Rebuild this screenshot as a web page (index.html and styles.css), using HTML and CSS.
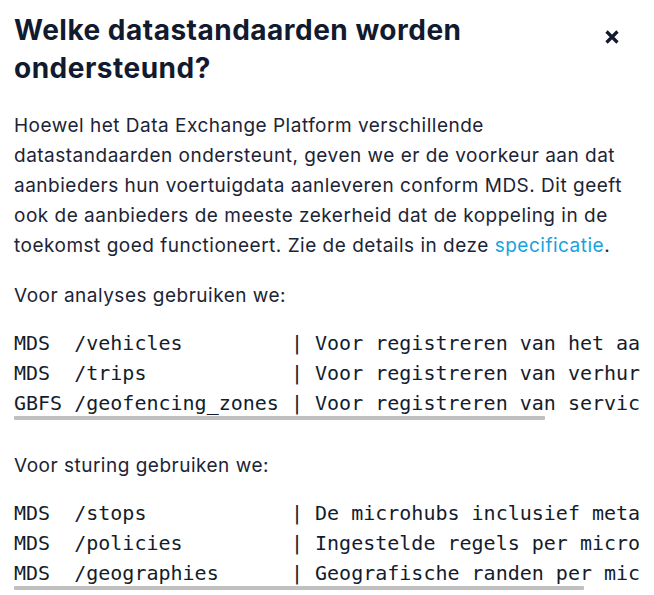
FILE: index.html
```html
<!DOCTYPE html>
<html lang="nl">
<head>
<meta charset="utf-8">
<title>Datastandaarden</title>
<link rel="stylesheet" href="styles.css">
</head>
<body>
<div class="modal">
  <header class="modal-header">
    <h1 class="modal-title">Welke datastandaarden worden ondersteund?</h1>
    <button class="close-btn" aria-label="Sluiten">
      <svg width="16" height="16" viewBox="0 0 16 16"><path d="M2.5 2.5 L13.5 13.5 M13.5 2.5 L2.5 13.5" stroke="#111a2e" stroke-width="3.2" stroke-linecap="butt" fill="none"/></svg>
    </button>
  </header>
  <div class="modal-body">
    <p class="text">Hoewel het Data Exchange Platform verschillende datastandaarden ondersteunt, geven we er de voorkeur aan dat aanbieders hun voertuigdata aanleveren conform MDS. Dit geeft ook de aanbieders de meeste zekerheid dat de koppeling in de toekomst goed functioneert. Zie de details in deze <a class="link" href="#">specificatie</a>.</p>
    <p class="text">Voor analyses gebruiken we:</p>
    <div class="code-block">
<pre class="code">MDS  /vehicles         | Voor registreren van het aanbod
MDS  /trips            | Voor registreren van verhuringen
GBFS /geofencing_zones | Voor registreren van servicegebieden</pre>
      <div class="scroll-thumb" style="width: 531px"></div>
    </div>
    <p class="text spaced">Voor sturing gebruiken we:</p>
    <div class="code-block">
<pre class="code">MDS  /stops            | De microhubs inclusief metadata
MDS  /policies         | Ingestelde regels per microhub
MDS  /geographies      | Geografische randen per microhub</pre>
      <div class="scroll-thumb" style="width: 570px"></div>
    </div>
  </div>
</div>
</body>
</html>
```
FILE: styles.css
```css
html, body {
  margin: 0;
  padding: 0;
  background: #ffffff;
}
body {
  font-family: Inter, "Noto Sans", sans-serif;
  color: #1a2233;
}
.modal {
  padding: 11px 14px 0 14px;
}
.modal-header {
  display: flex;
  align-items: flex-start;
  justify-content: space-between;
  gap: 16px;
}
.modal-title {
  margin: 0;
  font-size: 28px;
  line-height: 38px;
  font-weight: 700;
  color: #111a2e;
  letter-spacing: 0.5px;
}
.close-btn {
  margin: 18px 20px 0 0;
  padding: 0;
  border: 0;
  background: none;
  width: 16px;
  height: 16px;
  display: flex;
}
.modal-body {
  padding-top: 24px;
}
.text {
  margin: 0;
  font-size: 19px;
  line-height: 30px;
  letter-spacing: 0.5px;
  color: #1c2435;
}
.text + .text {
  margin-top: 20px;
}
.text.spaced {
  margin-top: 31px;
}
.link {
  color: #15a3e0;
  text-decoration: none;
}
.code-block {
  margin-top: 17px;
  overflow: hidden;
}
.code {
  margin: 0;
  padding: 0;
  font-family: "DejaVu Sans Mono", "Liberation Mono", monospace;
  font-size: 20px;
  line-height: 30px;
  color: #141c2c;
  overflow: hidden;
  white-space: pre;
}
.scroll-thumb {
  height: 4px;
  margin-top: -2px;
  background: #c0c0c0;
  border-radius: 1px;
}
```
